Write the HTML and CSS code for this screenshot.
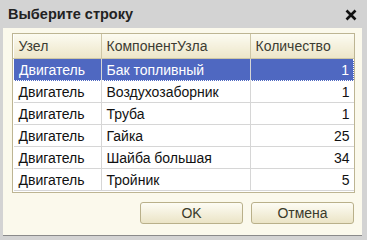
FILE: index.html
```html
<!DOCTYPE html>
<html lang="ru">
<head>
    <meta charset="UTF-8">
    <title>Выберите строку</title>
    <link rel="stylesheet" href="styles.css">
</head>
<body>

<div class="window">
    <div class="titlebar">
        <span class="title">Выберите строку</span>
        <span class="close">
            <svg width="12" height="12" viewBox="0 0 12 12"><path d="M1.5 1.5 L10.5 10.5 M10.5 1.5 L1.5 10.5" stroke="#111" stroke-width="2.6"/></svg>
        </span>
    </div>
    <div class="content">
        <div class="grid">
            <table>
                <tr class="head">
                    <th class="c1">Узел</th>
                    <th class="c2">КомпонентУзла</th>
                    <th class="c3">Количество</th>
                </tr>
                <tr class="selected">
                    <td>Двигатель</td><td>Бак топливный</td><td class="num">1</td>
                </tr>
                <tr>
                    <td>Двигатель</td><td>Воздухозаборник</td><td class="num">1</td>
                </tr>
                <tr>
                    <td>Двигатель</td><td>Труба</td><td class="num">1</td>
                </tr>
                <tr>
                    <td>Двигатель</td><td>Гайка</td><td class="num">25</td>
                </tr>
                <tr>
                    <td>Двигатель</td><td>Шайба большая</td><td class="num">34</td>
                </tr>
                <tr>
                    <td>Двигатель</td><td>Тройник</td><td class="num">5</td>
                </tr>
            </table>
        </div>
        <div class="buttons">
            <button class="btn">OK</button>
            <button class="btn">Отмена</button>
        </div>
    </div>
</div>

</body>
</html>
```

FILE: styles.css
```css
/* диалог выбора строки */
body { margin: 0; font-family: "Liberation Sans", Arial, sans-serif; font-size: 14px; }
.window { width: 367px; height: 240px; background: #d3d3d3; box-sizing: border-box; }
.titlebar { height: 28px; display: flex; align-items: center; justify-content: space-between; padding: 0 10px 0 8px; }
.title { font-weight: bold; font-size: 14.5px; color: #222; }
.close { display: flex; margin-top: 1px; }
.content { margin: 0 5px 0 3px; height: 208px; background: #fbf9ec; padding: 5px 7px 0 9px; box-sizing: border-box; border-bottom: 1px solid #8a8a8a; }
.grid { height: 160px; border: 1px solid #bdb593; background: #fff; box-sizing: border-box; }
table { width: 100%; border-collapse: collapse; table-layout: fixed; }
th { height: 24px; padding: 0 5px; text-align: left; font-weight: normal; color: #3c3c32; background: linear-gradient(#fcfbf1, #ede6c9); border-right: 1px solid #cdc6a6; border-bottom: 1px solid #cdc6a6; }
th.c1 { width: 77px; }
th.c2 { width: 138px; }
th.c3 { border-right: none; }
td { height: 21px; padding: 0 5px; border-right: 1px solid #d6d6d6; border-bottom: 1px solid #d6d6d6; color: #111; white-space: nowrap; }
td:last-child { border-right: none; }
td.num { text-align: right; padding-right: 4px; }
.selected td { background: #4f68c1; color: #fff; border-top: 1px dotted #fff; border-bottom: 1px dotted #fff; }
.selected td:first-child { border-left: 1px dotted #fff; }
.selected td:last-child { border-right: 1px dotted #fff; }
.buttons { display: flex; justify-content: flex-end; gap: 8px; margin-top: 9px; padding-right: 1px; }
.btn { width: 103px; height: 22px; font-family: "Liberation Sans", Arial, sans-serif; font-size: 14px; color: #3a3a2a; background: linear-gradient(#fdfcf4, #ebe4c6); border: 1px solid #b9b08a; border-radius: 3px; padding: 0; cursor: pointer; }
```
